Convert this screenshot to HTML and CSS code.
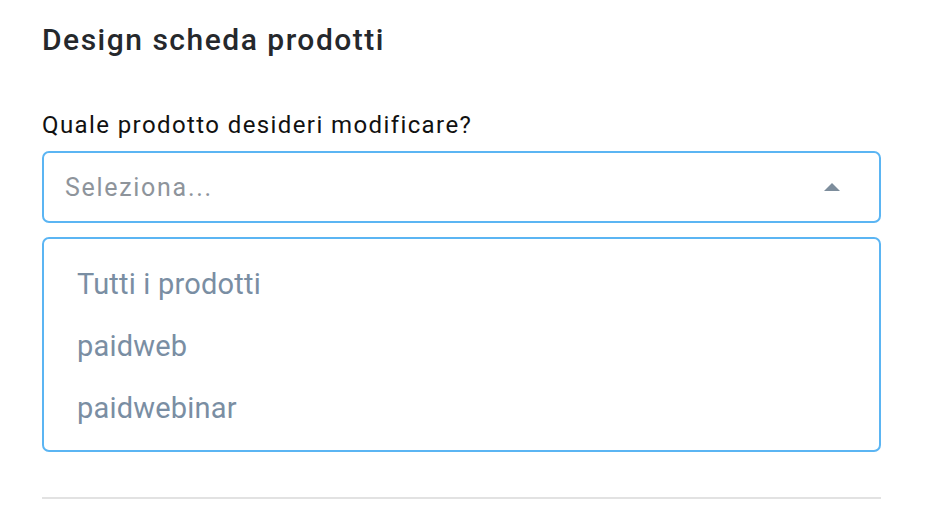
FILE: index.html
```html
<!DOCTYPE html>
<html lang="it">
<head>
<meta charset="utf-8">
<link rel="stylesheet" href="styles.css">
</head>
<body>
<div class="panel">
  <h2 class="title">Design scheda prodotti</h2>
  <label class="label">Quale prodotto desideri modificare?</label>
  <div class="select">
    <span class="placeholder">Seleziona...</span>
    <svg class="arrow" width="16" height="8" viewBox="0 0 16 8"><path d="M0 8 L8 0 L16 8 Z" fill="#7d8d9c"/></svg>
  </div>
  <ul class="menu">
    <li>Tutti i prodotti</li>
    <li>paidweb</li>
    <li>paidwebinar</li>
  </ul>
  <hr class="divider">
</div>
</body>
</html>
```

FILE: styles.css
```css
html, body {
  margin: 0;
  padding: 0;
  background: #ffffff;
}
body {
  font-family: Roboto, "Liberation Sans", sans-serif;
  width: 926px;
  height: 508px;
  overflow: hidden;
}
.panel {
  padding: 20px 45px 0 42px;
  display: flex;
  flex-direction: column;
}
.title {
  margin: 0;
  font-size: 30px;
  font-weight: 500;
  letter-spacing: 1.5px;
  color: #25282c;
  line-height: 40px;
}
.label {
  margin-top: 50px;
  font-size: 24px;
  letter-spacing: 1.4px;
  color: #111;
  line-height: 30px;
}
.select {
  margin-top: 11px;
  height: 68px;
  border: 2px solid #5bb5f3;
  border-radius: 7px;
  display: flex;
  align-items: center;
  justify-content: space-between;
  padding: 0 39px 0 21px;
}
.placeholder {
  font-size: 25px;
  letter-spacing: 1.7px;
  color: #8e949b;
}
.arrow {
  display: block;
}
.menu {
  list-style: none;
  margin: 14px 0 0;
  padding: 14px 0 11px;
  border: 2px solid #5bb5f3;
  border-radius: 7px;
}
.menu li {
  font-size: 29px;
  letter-spacing: 0.2px;
  line-height: 62px;
  color: #7a8ea3;
  padding-left: 33px;
}
.divider {
  margin: 45px 0 0;
  border: none;
  border-top: 2px solid #e2e2e2;
}
```
